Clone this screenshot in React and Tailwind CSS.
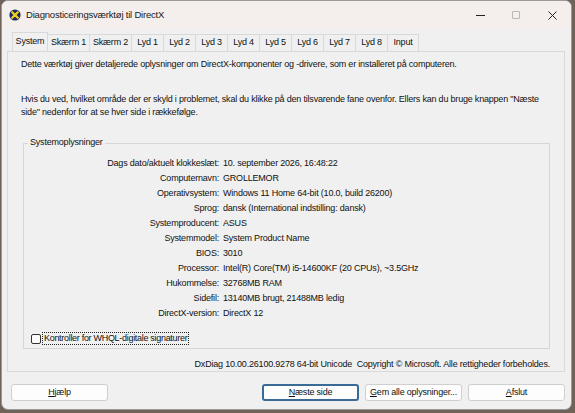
import React from "react";

const tabs = ["System", "Skærm 1", "Skærm 2", "Lyd 1", "Lyd 2", "Lyd 3", "Lyd 4", "Lyd 5", "Lyd 6", "Lyd 7", "Lyd 8", "Input"];

const info = [
    ["Dags dato/aktuelt klokkeslæt:", "10. september 2026, 16:48:22"],
    ["Computernavn:", "GROLLEMOR"],
    ["Operativsystem:", "Windows 11 Home 64-bit (10.0, build 26200)"],
    ["Sprog:", "dansk (International indstilling: dansk)"],
    ["Systemproducent:", "ASUS"],
    ["Systemmodel:", "System Product Name"],
    ["BIOS:", "3010"],
    ["Processor:", "Intel(R) Core(TM) i5-14600KF (20 CPUs), ~3.5GHz"],
    ["Hukommelse:", "32768MB RAM"],
    ["Sidefil:", "13140MB brugt, 21488MB ledig"],
    ["DirectX-version:", "DirectX 12"],
];

function DxIcon() {
    return (
        <svg width="12" height="12" viewBox="0 0 12 12">
            <circle cx="6" cy="6" r="5.6" fill="#1d2a5c" />
            <path d="M3.2 3.2 L8.8 8.8 M8.8 3.2 L3.2 8.8" stroke="#f2d21b" strokeWidth="2.2" strokeLinecap="round" />
        </svg>
    );
}

function Button({ children, primary }) {
    return (
        <button
            type="button"
            className={`h-[17px] w-[97px] whitespace-nowrap rounded-[3px] bg-[#fdfdfd] text-[9px] leading-none tracking-[-0.2px] text-[#111] ${primary ? "border-2 border-[#3a6a96]" : "border border-[#cfcfcf]"}`}
        >
            {children}
        </button>
    );
}

function tabWidth(t) {
    if (t === "System") return "w-[36px]";
    if (t.startsWith("Skærm")) return "w-[43px]";
    if (t.startsWith("Lyd")) return "w-[33px]";
    return "w-[32px]";
}

export default function App() {
    return (
        <div className="flex h-[413px] w-[575px] bg-[#6f6259] pb-[3px] pl-[1px] pr-[3px] font-['Liberation_Sans',Arial,sans-serif] text-[#111]">
            <div className="flex flex-1 flex-col overflow-hidden rounded-[7px] border border-[#9a9a9a] bg-[#f0f0f0]">
                {/* title bar */}
                <div className="flex h-[28px] shrink-0 items-center bg-[#f4eeec] pl-[7px]">
                    <DxIcon />
                    <span className="ml-[5px] text-[9.5px] tracking-[-0.2px] text-[#1a1a1a]">Diagnosticeringsværktøj til DirectX</span>
                    <div className="ml-auto flex h-full items-center">
                        <div className="flex w-[35px] justify-center">
                            <div className="h-[1px] w-[9px] bg-[#222]" />
                        </div>
                        <div className="flex w-[35px] justify-center">
                            <div className="h-[8px] w-[8px] rounded-[1px] border border-[#b8b8b8]" />
                        </div>
                        <div className="flex w-[38px] justify-center">
                            <svg width="9" height="9" viewBox="0 0 9 9">
                                <path d="M0.5 0.5 L8.5 8.5 M8.5 0.5 L0.5 8.5" stroke="#222" strokeWidth="1" />
                            </svg>
                        </div>
                    </div>
                </div>

                {/* tab strip */}
                <div className="mt-[3px] flex h-[19px] shrink-0 items-end pl-[10px]">
                    {tabs.map((t, i) => (
                        <div
                            key={t}
                            className={`-mr-[1px] flex items-center justify-center whitespace-nowrap border border-b-0 border-[#d9d9d9] bg-[#f0f0f0] text-[9px] tracking-[-0.2px] ${tabWidth(t)} ${i === 0 ? "relative z-10 h-[19px]" : "h-[17px]"}`}
                        >
                            {t}
                        </div>
                    ))}
                </div>

                {/* tab panel */}
                <div className="ml-[5px] mr-[6px] flex h-[321px] shrink-0 flex-col border border-[#d9d9d9] bg-[#f0f0f0] px-[13px] text-[9px] tracking-[-0.2px]">
                    <p className="mt-[6px] leading-[13px]">
                        Dette værktøj giver detaljerede oplysninger om DirectX-komponenter og -drivere, som er installeret på computeren.
                    </p>
                    <p className="mt-[22px] leading-[13px]">
                        Hvis du ved, hvilket område der er skyld i problemet, skal du klikke på den tilsvarende fane ovenfor. Ellers kan du bruge knappen "Næste side" nedenfor for at se hver side i rækkefølge.
                    </p>

                    {/* system info group */}
                    <div className="relative ml-[2px] mr-[1px] mt-[24px] h-[210px] border border-[#d6d6d6]">
                        <span className="absolute -top-[8px] left-[4px] bg-[#f0f0f0] px-[2px] leading-[13px]">Systemoplysninger</span>
                        <div className="mt-[12px] flex flex-col">
                            {info.map(([k, v]) => (
                                <div key={k} className="flex h-[15px] items-center">
                                    <span className="w-[195px] text-right">{k}</span>
                                    <span className="ml-[4px]">{v}</span>
                                </div>
                            ))}
                        </div>
                        <div className="ml-[7px] mt-[11px] flex items-center">
                            <div className="h-[10px] w-[10px] rounded-[2px] border border-[#333] bg-[#fbfbfb]" />
                            <span className="ml-[1px] border border-dotted border-[#222] px-[1px] leading-[11px] tracking-[-0.3px]">
                                Kontroller for WHQL-digitale signaturer
                            </span>
                        </div>
                    </div>

                    <p className="mr-[1px] mt-[9px] text-right leading-[13px]">
                        DxDiag 10.00.26100.9278 64-bit Unicode&nbsp; Copyright © Microsoft. Alle rettigheder forbeholdes.
                    </p>
                </div>

                {/* dialog buttons */}
                <div className="mt-[12px] flex shrink-0 pl-[9px] pr-[6px]">
                    <Button>
                        <span className="underline">H</span>jælp
                    </Button>
                    <div className="ml-auto flex gap-[6px]">
                        <Button primary>
                            <span className="underline">N</span>æste side
                        </Button>
                        <Button>
                            <span className="underline">G</span>em alle oplysninger...
                        </Button>
                        <Button>
                            <span className="underline">A</span>fslut
                        </Button>
                    </div>
                </div>
            </div>
        </div>
    );
}
